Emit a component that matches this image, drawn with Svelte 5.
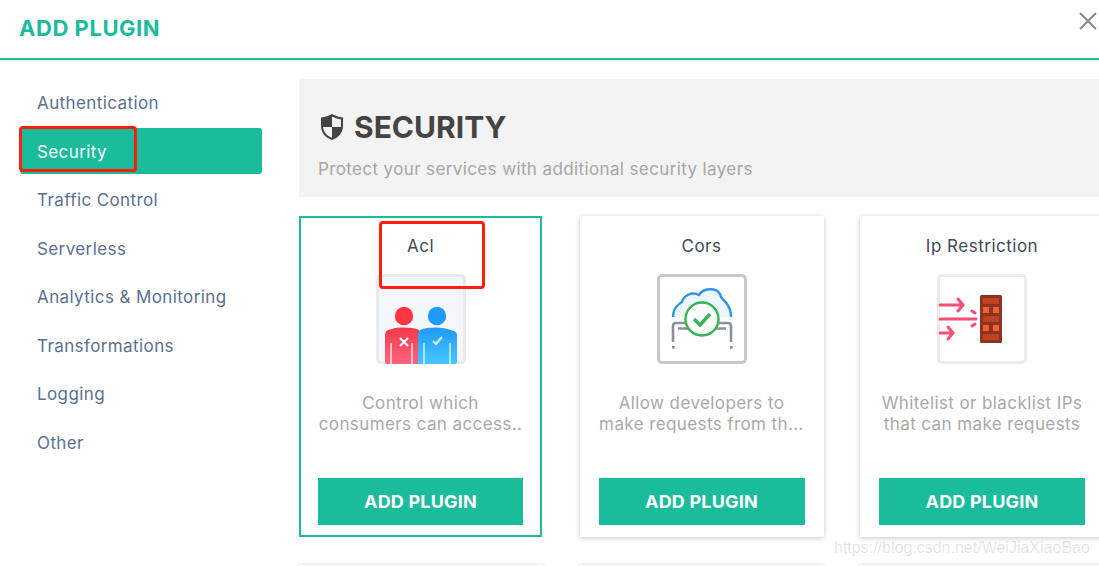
<script>
  const categories = ['Authentication', 'Security', 'Traffic Control', 'Serverless', 'Analytics & Monitoring', 'Transformations', 'Logging', 'Other'];

  const plugins = [
    { name: 'Acl', icon: 'acl', selected: true, lines: ['Control which', 'consumers can access..'] },
    { name: 'Cors', icon: 'cors', lines: ['Allow developers to', 'make requests from th...'] },
    { name: 'Ip Restriction', icon: 'ip', lines: ['Whitelist or blacklist IPs', 'that can make requests'] }
  ];
</script>

<div class="page">
  <header>
    <h1>ADD PLUGIN</h1>
    <svg class="close" width="20" height="20" viewBox="0 0 20 20">
      <path d="M2 2 L18 18 M18 2 L2 18" stroke="#888" stroke-width="2" fill="none" />
    </svg>
  </header>

  <div class="body">
    <nav>
      {#each categories as cat}
        <div class="nav-item" class:active={cat === 'Security'}>{cat}</div>
      {/each}
    </nav>

    <main>
      <section class="banner">
        <h2>
          <svg width="24" height="28" viewBox="0 0 24 28">
            <path d="M12 1 C15 3 19 4 23 4.500 V13 C23 20 18 25 12 27 C6 25 1 20 1 13 V4.500 C5 4 9 3 12 1 Z" fill="#444" />
            <path d="M12 3.500 C15 5 18 6 21 6.500 V14 H12 Z M12 14 V24.800 C7 23 3.500 19 3 14 Z" fill="#f2f2f2" />
          </svg>
          SECURITY
        </h2>
        <p>Protect your services with additional security layers</p>
      </section>

      <div class="grid">
        {#each plugins as p}
          <article class="card" class:selected={p.selected}>
            <h3>{p.name}</h3>
            <div class="icon {p.icon}">
              {#if p.icon === 'acl'}
                <svg width="90" height="90" viewBox="-3 -3 90 90">
                  <defs>
                    <linearGradient id="redp" x1="0" y1="0" x2="0" y2="1">
                      <stop offset="0" stop-color="#f6394a" />
                      <stop offset="1" stop-color="#fb6480" />
                    </linearGradient>
                    <linearGradient id="bluep" x1="0" y1="0" x2="0" y2="1">
                      <stop offset="0" stop-color="#2199f5" />
                      <stop offset="1" stop-color="#46c8fd" />
                    </linearGradient>
                  </defs>
                  <circle cx="25" cy="39" r="9.200" fill="#fb3640" />
                  <circle cx="58" cy="39" r="9.200" fill="#1f9bf6" />
                  <path d="M6 59 C6 54 8 53 13 52 C19 50 33 50 40 53 L40 87 H8 Q6 87 6 85 Z" fill="url(#redp)" />
                  <path d="M39 56 C40 53 43 52 48 51 C55 50 64 50 72 53 C76 54 78 55 78 59 V85 Q78 87 76 87 H39 Z" fill="url(#bluep)" />
                  <path d="M12 66 V87 M33 66 V87 M45 66 V87 M71 66 V87" stroke="#f3f6fa" stroke-width="1.300" />
                  <path d="M21 61 L29 69 M29 61 L21 69" stroke="#fff" stroke-width="2" />
                  <path d="M54 64 L57 67 L63 60" stroke="#d8f2ff" stroke-width="2" fill="none" />
                </svg>
              {:else if p.icon === 'cors'}
                <svg width="90" height="90" viewBox="-3 -3 90 90">
                  <path d="M13 40 C13 32 18 27 22 25 C23 19 32 14 39 18 C43 11 56 10 60 17 C61 23 65 23 67 27 C70 31 71 36 71 40 Z" fill="#eef6fd" />
                  <path d="M13 40 C13 32 18 27 22 25 C23 19 32 14 39 18 C43 11 56 10 60 17 C61 23 65 23 67 27 C70 31 71 36 71 40" fill="none" stroke="#2b96e8" stroke-width="2.400" />
                  <path d="M13 65 V49 Q13 46 16 46 H68 Q71 46 71 49 V65 M18 51.500 H66" fill="none" stroke="#8a9299" stroke-width="2.600" />
                  <rect x="12" y="69" width="2.600" height="2.600" fill="#8a9299" />
                  <rect x="70" y="69" width="2.600" height="2.600" fill="#8a9299" />
                  <circle cx="42" cy="42" r="16.500" fill="#fff" stroke="#35b553" stroke-width="2.400" />
                  <path d="M34 42 L40 48 L50 37" fill="none" stroke="#35b553" stroke-width="3.400" />
                </svg>
              {:else}
                <svg width="90" height="90" viewBox="-3 -3 90 90">
                  <path d="M0 28 H22 M18 22 L23 28 L18 34 M0 42 H36 M0 56 H13 M8 50 L13 56 L8 62" fill="none" stroke="#fb4e72" stroke-width="3" stroke-linecap="round" />
                  <path d="M32 34 L35 36 M35 47 L32 49" stroke="#fb4e72" stroke-width="3" stroke-linecap="round" />
                  <rect x="40" y="18" width="22" height="48" rx="1.500" fill="#8d3320" />
                  <rect x="43" y="21" width="16" height="6" fill="#bc4423" />
                  <rect x="43" y="30" width="6" height="6" fill="#ef5f2f" />
                  <rect x="53" y="30" width="6" height="6" fill="#ef5f2f" />
                  <rect x="43" y="39" width="16" height="6" fill="#bc4423" />
                  <rect x="43" y="48" width="6" height="6" fill="#ef5f2f" />
                  <rect x="53" y="48" width="6" height="6" fill="#ef5f2f" />
                  <rect x="43" y="57" width="16" height="6" fill="#bc4423" />
                </svg>
              {/if}
            </div>
            <p class="desc">
              {#each p.lines as line}
                <span>{line}</span>
              {/each}
            </p>
            <button>ADD PLUGIN</button>
          </article>
        {/each}
        <article class="card stub"></article>
        <article class="card stub"></article>
        <article class="card stub"></article>
      </div>
    </main>
  </div>

  <!-- annotations drawn on top of the screenshot -->
  <div class="mark mark-nav"></div>
  <div class="mark mark-acl"></div>
  <div class="watermark">https://blog.csdn.net/WeiJiaXiaoBao</div>
</div>

<style>
  :global(body) {
    margin: 0;
    background: #fff;
  }
  .page {
    position: relative;
    width: 1099px;
    height: 566px;
    overflow: hidden;
    background: #fff;
    font-family: Inter, "Open Sans", sans-serif;
  }
  header {
    height: 58px;
    border-bottom: 2px solid #1abc9c;
    display: flex;
    align-items: center;
    justify-content: space-between;
    padding: 0 1px 0 19px;
  }
  h1 {
    margin: 0 0 3px;
    font-size: 22px;
    font-weight: 700;
    letter-spacing: 0.55px;
    color: #1abc9c;
  }
  .close {
    margin: 0 0 16px;
  }
  .body {
    display: flex;
    padding: 19px 0 0 20px;
    gap: 37px;
  }
  nav {
    width: 242px;
    flex: none;
    display: flex;
    flex-direction: column;
    gap: 2.500px;
  }
  .nav-item {
    height: 46px;
    line-height: 48px;
    padding-left: 17px;
    border-radius: 3px;
    font-size: 17px;
    letter-spacing: 0.4px;
    color: #5a7190;
  }
  .nav-item.active {
    background: #1abc9c;
    color: #fff;
  }
  main {
    width: 804px;
    flex: none;
  }
  .banner {
    height: 118px;
    box-sizing: border-box;
    padding: 29px 19px 0;
    background: #f3f3f3;
  }
  h2 {
    margin: 0;
    display: flex;
    align-items: center;
    gap: 10px;
    padding-left: 2px;
    font-size: 30px;
    line-height: 38px;
    font-weight: 700;
    color: #444;
  }
  .banner p {
    margin: 12px 0 0;
    font-size: 17px;
    line-height: 22px;
    letter-spacing: 0.38px;
    color: #a6a6a6;
  }
  .grid {
    margin-top: 19px;
    display: grid;
    grid-template-columns: repeat(3, 244px);
    column-gap: 36.500px;
    row-gap: 28px;
  }
  .card {
    height: 321px;
    box-sizing: border-box;
    padding: 18px 19px 12px;
    display: flex;
    flex-direction: column;
    align-items: center;
    background: #fff;
    box-shadow: 0 1px 5px rgba(0, 0, 0, 0.22);
    text-align: center;
  }
  .card.selected {
    border: 2px solid #1abc9c;
    box-shadow: none;
    padding: 16px 17px 10px;
    width: 243px;
  }
  h3 {
    margin: 0;
    font-size: 17px;
    line-height: 24px;
    font-weight: 400;
    letter-spacing: 0.5px;
    color: #3f4b57;
  }
  .icon {
    margin-top: 16px;
    width: 90px;
    height: 90px;
    box-sizing: border-box;
    border: 3px solid #ececec;
    border-radius: 5px;
    flex: none;
  }
  .icon.acl {
    background: #f3f6fa;
    border-color: #e6eaef;
  }
  .icon.cors {
    border-color: #c8c8c8;
  }
  .icon svg {
    display: block;
    margin: -3px;
  }
  .desc {
    margin: 29px 0 0;
    font-size: 17px;
    line-height: 21px;
    letter-spacing: 0.4px;
    color: #a9a9a9;
    white-space: nowrap;
    flex: 1;
  }
  .desc span {
    display: block;
  }
  button {
    flex: none;
    width: 100%;
    height: 47px;
    border: 0;
    background: #1abc9c;
    color: #fff;
    font-family: inherit;
    font-size: 18px;
    font-weight: 700;
    letter-spacing: 0.2px;
  }
  .mark {
    position: absolute;
    box-sizing: border-box;
    border: 3px solid #ff1d0d;
    border-radius: 4px;
  }
  .mark-nav {
    left: 19px;
    top: 126px;
    width: 118px;
    height: 46px;
  }
  .mark-acl {
    left: 379px;
    top: 221px;
    width: 106px;
    height: 68px;
  }
  .watermark {
    position: absolute;
    left: 834px;
    top: 539px;
    font-family: "Liberation Sans", sans-serif;
    font-size: 16px;
    color: rgba(0, 0, 0, 0.12);
    white-space: nowrap;
  }
</style>
